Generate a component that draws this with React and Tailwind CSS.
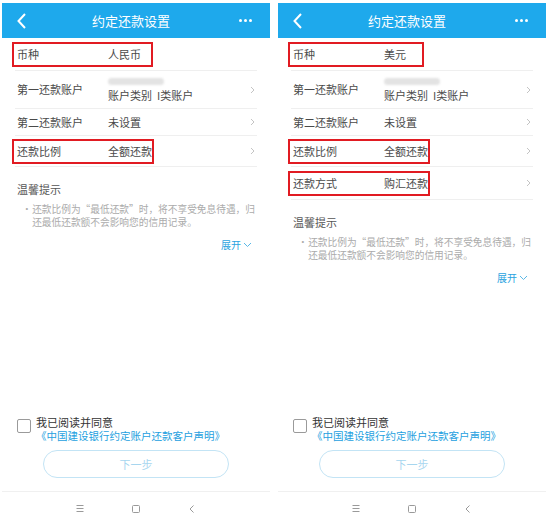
import React from "react";

const font = "font-['Noto_Sans_CJK_SC','Noto_Sans',sans-serif]";

function Chevron() {
  return (
    <svg width="5" height="8" viewBox="0 0 5 8" className="shrink-0">
      <path d="M1 1 L4 4 L1 7" fill="none" stroke="#c4c4c4" strokeWidth="1" />
    </svg>
  );
}

function Row({ label, value, h, boxed, boxW, arrow, account }) {
  const inner = (
    <>
      <div className="w-[91px] shrink-0">{label}</div>
      {account ? (
        <div className="flex flex-col self-stretch pt-[7px]">
          <div className="w-[56px] h-[7px] rounded-sm bg-[#e3e3e3] blur-[1px]" />
          <div className="mt-[3px] leading-[14px]">账户类别&nbsp;&nbsp;I类账户</div>
        </div>
      ) : (
        <div className="whitespace-nowrap">{value}</div>
      )}
    </>
  );
  return (
    <div
      className="flex items-center border-b border-[#efefef] pr-[2px] whitespace-nowrap"
      style={{ height: h }}
    >
      {boxed ? (
        <div
          className="flex items-center ml-[-3px] h-[25px] border-2 border-[#e11b22] pl-[3px] shrink-0"
          style={{ width: boxW }}
        >
          {inner}
        </div>
      ) : (
        <div className="flex items-center pl-[2px] self-stretch">{inner}</div>
      )}
      <div className="flex-1" />
      {arrow && <Chevron />}
    </div>
  );
}

function Phone({ rows }) {
  return (
    <div className={`w-[268px] h-[525px] flex flex-col bg-white ${font} text-[11px] text-[#4a4a4a]`}>
      <div className="mt-[3px] h-[35px] bg-[#1ea9ec] flex items-center shrink-0">
        <svg width="9" height="16" viewBox="0 0 9 16" className="ml-[15px]">
          <path d="M8 1 L1.5 8 L8 15" fill="none" stroke="#fff" strokeWidth="2" />
        </svg>
        <div className="flex-1 text-center text-white text-[13px] mr-[3px]">约定还款设置</div>
        <div className="flex gap-[2px] mr-[18px]">
          <span className="w-[3px] h-[3px] rounded-full bg-white" />
          <span className="w-[3px] h-[3px] rounded-full bg-white" />
          <span className="w-[3px] h-[3px] rounded-full bg-white" />
        </div>
      </div>

      <div className="mx-[13px] flex flex-col">
        {rows.map((r) => (
          <Row key={r.label} {...r} />
        ))}
      </div>

      <div className="px-[15px]">
        <div className="mt-[15px] leading-[14px] text-[#555]">温馨提示</div>
        <div className="mt-[7px] flex text-[9.7px] leading-[13px] text-[#ababab] whitespace-nowrap">
          <span className="w-[18px] pl-[5px]">·</span>
          <div>
            还款比例为“最低还款”时，将不享受免息待遇，归
            <br />
            还最低还款额不会影响您的信用记录。
          </div>
        </div>
        <div className="mt-[9px] flex items-center justify-end gap-[2px] pr-[3px] text-[10px] leading-[14px] text-[#2aa3e0]">
          展开
          <svg width="9" height="6" viewBox="0 0 9 6">
            <path d="M1 1 L4.5 4.5 L8 1" fill="none" stroke="#5ab8e6" strokeWidth="1" />
          </svg>
        </div>
      </div>

      <div className="mt-auto flex flex-col">
        <div className="flex pl-[15px]">
          <div className="mt-[3px] w-[14px] h-[14px] rounded-[2px] border border-[#9a9a9a] shrink-0" />
          <div className="ml-[5px] flex flex-col whitespace-nowrap">
            <div className="leading-[13px] text-[#333]">我已阅读并同意</div>
            <div className="leading-[14px] text-[10.5px] text-[#1d9fe0]">《中国建设银行约定账户还款客户声明》</div>
          </div>
        </div>
        <div className="mt-[7px] ml-[41px] w-[186px] h-[28px] rounded-full border border-[#c3e4f5] flex items-center justify-center text-[11px] text-[#a7d6ef]">
          下一步
        </div>
        <div className="mt-[13px] border-t border-[#f0f0f0]" />
        <div className="h-[33px] flex items-center justify-center gap-[46px]">
          <svg width="10" height="9" viewBox="0 0 10 9">
            <path d="M1.5 1.5 H8.5 M1.5 4.5 H8.5 M1.5 7.5 H8.5" stroke="#9a9a9a" strokeWidth="1" />
          </svg>
          <svg width="10" height="10" viewBox="0 0 10 10">
            <rect x="1.5" y="1.5" width="7" height="7" rx="1" fill="none" stroke="#9a9a9a" strokeWidth="1" />
          </svg>
          <svg width="10" height="10" viewBox="0 0 10 10">
            <path d="M6.5 1.5 L3 5 L6.5 8.5" fill="none" stroke="#9a9a9a" strokeWidth="1" />
          </svg>
        </div>
      </div>
    </div>
  );
}

export default function App() {
  const left = [
    { label: "币种", value: "人民币", h: 33, boxed: true, boxW: 141 },
    { label: "第一还款账户", h: 38, arrow: true, account: true },
    { label: "第二还款账户", value: "未设置", h: 27, arrow: true },
    { label: "还款比例", value: "全额还款", h: 31, arrow: true, boxed: true, boxW: 142 },
  ];
  const right = [
    { label: "币种", value: "美元", h: 33, boxed: true, boxW: 136 },
    { label: "第一还款账户", h: 38, arrow: true, account: true },
    { label: "第二还款账户", value: "未设置", h: 27, arrow: true },
    { label: "还款比例", value: "全额还款", h: 31, arrow: true, boxed: true, boxW: 142 },
    { label: "还款方式", value: "购汇还款", h: 33, arrow: true, boxed: true, boxW: 142 },
  ];
  return (
    <div className="w-[548px] h-[525px] bg-white flex gap-[8px] pl-[2px] overflow-hidden">
      <Phone rows={left} />
      <Phone rows={right} />
    </div>
  );
}
